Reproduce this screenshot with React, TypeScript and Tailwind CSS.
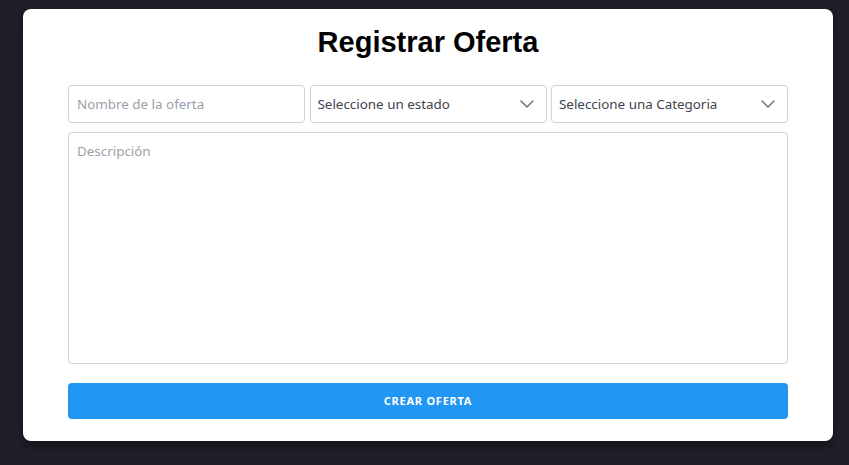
import React from "react";

function Chevron() {
  return (
    <svg width="14" height="8" viewBox="0 0 14 8" fill="none" className="shrink-0">
      <path d="M1 1l6 6 6-6" stroke="#6b7280" strokeWidth="1.5" strokeLinecap="round" strokeLinejoin="round" />
    </svg>
  );
}

export default function App() {
  const font = { fontFamily: '"Noto Sans", "Open Sans", sans-serif' };
  return (
    <div className="w-[849px] h-[465px] bg-[#1f1f29] overflow-hidden pt-[9px] pl-[23px]">
      <div className="w-[810px] h-[432px] bg-white rounded-lg shadow-[0_4px_12px_rgba(0,0,0,0.45)] px-[45px] pt-[13px]">
        <h1
          className="text-center text-[29px] font-bold text-black leading-[40px]"
          style={{ fontFamily: '"Liberation Sans", Arial, sans-serif' }}
        >
          Registrar Oferta
        </h1>
        <div className="mt-[23px] grid grid-cols-3 gap-[4.5px]" style={font}>
          <div className="h-[38px] min-w-0 border border-[#ced4da] rounded-[4px] flex items-center px-[8px] text-[13.4px] text-[#9aa0ab]">
            Nombre de la oferta
          </div>
          <div className="h-[38px] min-w-0 border border-[#ced4da] rounded-[4px] flex items-center justify-between pl-[7px] pr-[12px] text-[13.4px] text-[#3f4350]">
            <span>Seleccione un estado</span>
            <Chevron />
          </div>
          <div className="h-[38px] min-w-0 border border-[#ced4da] rounded-[4px] flex items-center justify-between pl-[7px] pr-[12px] text-[13.4px] text-[#3f4350]">
            <span>Seleccione una Categoria</span>
            <Chevron />
          </div>
        </div>
        <div
          className="mt-[9px] h-[232px] border border-[#ced4da] rounded-[4px] px-[8px] pt-[8px] text-[13.4px] text-[#9aa0ab]"
          style={font}
        >
          Descripción
        </div>
        <div
          className="mt-[19px] h-[36px] bg-[#2196f3] rounded-[4px] flex items-center justify-center text-white text-[11px] font-bold tracking-[0.75px]"
          style={font}
        >
          CREAR OFERTA
        </div>
      </div>
    </div>
  );
}
